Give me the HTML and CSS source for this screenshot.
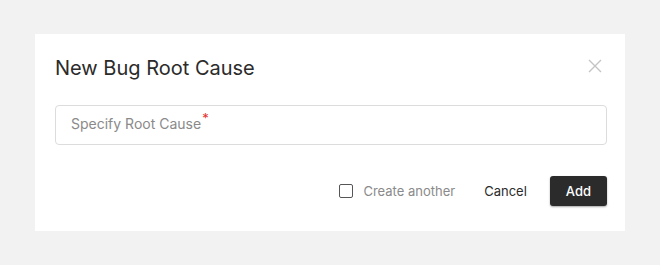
FILE: index.html
```html
<!DOCTYPE html>
<html lang="en">
<head>
<meta charset="UTF-8">
<meta name="viewport" content="width=device-width, initial-scale=1.0">
<title>New Bug Root Cause</title>
<link rel="stylesheet" href="styles.css">
</head>
<body>
<div class="dialog">
  <div class="dialog-header">
    <h2 class="dialog-title">New Bug Root Cause</h2>
    <button class="close-btn" aria-label="Close">
      <svg width="14" height="14" viewBox="0 0 14 14">
        <path d="M1 1 L13 13 M13 1 L1 13" stroke="#c4c4c4" stroke-width="1.4" fill="none"/>
      </svg>
    </button>
  </div>
  <div class="field">
    <span class="placeholder">Specify Root Cause<span class="required">*</span></span>
  </div>
  <div class="dialog-footer">
    <label class="check">
      <span class="box"></span>
      <span class="check-label">Create another</span>
    </label>
    <button class="btn btn-cancel">Cancel</button>
    <button class="btn btn-add">Add</button>
  </div>
</div>
</body>
</html>
```

FILE: styles.css
```css
body {
  margin: 0;
  background-color: #f2f2f2;
  font-family: 'Inter', 'Noto Sans', sans-serif;
  color: #2b2b2b;
}
.dialog {
  width: 590px;
  box-sizing: border-box;
  margin: 34px 0 0 35px;
  padding: 22px 18px 25px 20px;
  background-color: #fff;
}
.dialog-header {
  display: flex;
  align-items: center;
  justify-content: space-between;
}
.dialog-title {
  margin: 0;
  font-size: 20px;
  line-height: 24px;
  font-weight: 400;
  color: #2b2b2b;
}
.close-btn {
  display: flex;
  padding: 0;
  margin-right: 5px;
  margin-top: -5px;
  border: none;
  background: none;
  cursor: pointer;
}
.field {
  margin-top: 25px;
  height: 40px;
  box-sizing: border-box;
  border: 1px solid #dcdcdc;
  border-radius: 4px;
  padding: 0 15px;
  display: flex;
  align-items: center;
}
.placeholder {
  font-size: 14px;
  color: #8a8a8a;
  position: relative;
  top: -2px;
}
.required {
  color: #e5322d;
  font-size: 13px;
  position: relative;
  top: -6px;
  margin-left: 1px;
}
.dialog-footer {
  margin-top: 31px;
  display: flex;
  justify-content: flex-end;
  align-items: center;
}
.check {
  display: flex;
  align-items: center;
  gap: 10px;
  margin-right: 17px;
  cursor: pointer;
}
.box {
  width: 14px;
  height: 14px;
  box-sizing: border-box;
  border: 1px solid #555;
  border-radius: 2px;
}
.check-label {
  font-size: 13px;
  color: #8a8a8a;
}
.btn {
  font-family: inherit;
  font-size: 13px;
  height: 30px;
  border: none;
  border-radius: 3px;
  cursor: pointer;
}
.btn-cancel {
  background: none;
  color: #2b2b2b;
  padding: 0 12px;
  margin-right: 11px;
}
.btn-add {
  background-color: #2b2b2b;
  color: #fff;
  font-weight: 500;
  padding: 0 16px;
  box-shadow: 0 1px 2px rgba(0, 0, 0, 0.35);
}
```
